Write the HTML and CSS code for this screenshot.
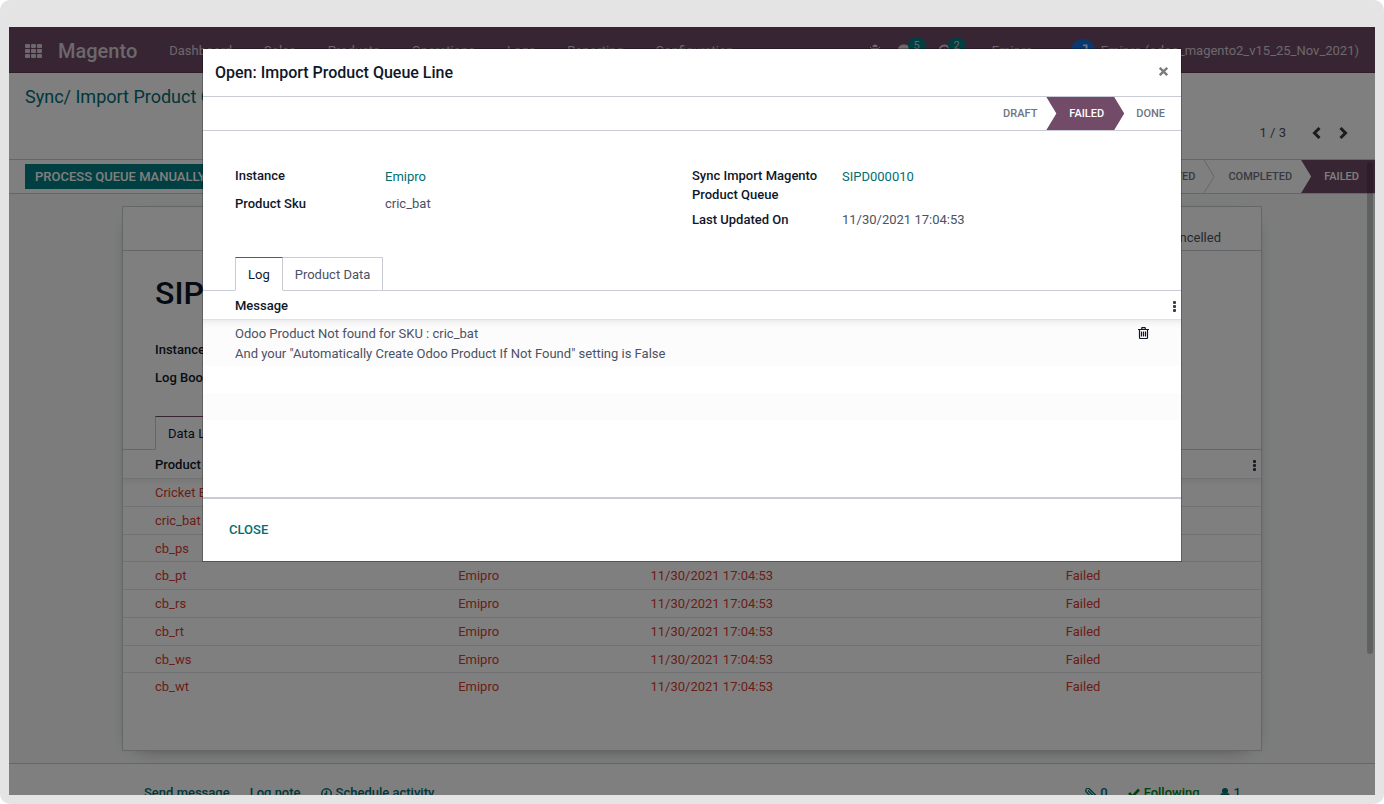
FILE: index.html
```
<!DOCTYPE html>
<html lang="en">
<head>
<meta charset="utf-8">
<title>Magento - Import Product Queue Line</title>
<link rel="stylesheet" href="styles.css">
</head>
<body>
<div class="frame">
<div class="app">
  <header class="navbar">
    <button class="apps" aria-label="Apps"><svg width="18" height="14" viewBox="0 0 18 14" fill="currentColor"><rect x="0" y="0" width="5" height="4" rx="1"/><rect x="6" y="0" width="5" height="4" rx="1"/><rect x="12" y="0" width="5" height="4" rx="1"/><rect x="0" y="5" width="5" height="4" rx="1"/><rect x="6" y="5" width="5" height="4" rx="1"/><rect x="12" y="5" width="5" height="4" rx="1"/><rect x="0" y="10" width="5" height="4" rx="1"/><rect x="6" y="10" width="5" height="4" rx="1"/><rect x="12" y="10" width="5" height="4" rx="1"/></svg></button>
    <a class="brand" href="#">Magento</a>
    <nav class="menu">
      <a href="#">Dashboard</a><a href="#">Sales</a><a href="#">Products</a><a href="#">Operations</a><a href="#">Logs</a><a href="#">Reporting</a><a href="#">Configuration</a>
    </nav>
    <div class="systray">
      <button class="tray" aria-label="Debug"><svg width="12" height="14" viewBox="0 0 12 14" fill="currentColor"><path d="M3.500 3a2.500 2.500 0 0 1 5 0z"/><path d="M3 4h6v5a3 3 0 0 1-6 0z"/><path d="M1 3l2 2M11 3L9 5M0 8h3M9 8h3M1 12l2-2M11 12l-2-2" stroke="currentColor" stroke-width="1" fill="none"/></svg></button>
      <button class="tray" aria-label="Messages"><svg width="15" height="13" viewBox="0 0 15 13" fill="currentColor"><ellipse cx="6" cy="5" rx="6" ry="4.500"/><path d="M2 7l-1 4 4-2zM12.500 4.500c0 3-3 5-5.500 5 2 2 4 1.500 4.500 1.300L14 12l-.7-2C15.500 8.500 15 5.500 12.500 4.500z"/></svg><span class="badge">5</span></button>
      <button class="tray" aria-label="Activities"><svg width="13" height="13" viewBox="0 0 13 13" fill="none" stroke="currentColor" stroke-width="2"><circle cx="6.500" cy="6.500" r="5"/><path d="M6.500 4.500v3h-2" stroke-width="1"/></svg><span class="badge">2</span></button>
      <a class="company" href="#">Emipro</a>
      <a class="user" href="#"><svg width="24" height="24" viewBox="0 0 24 24"><circle cx="12" cy="12" r="12" fill="#1272e0"/><path d="M12 7V5.500h4.500V15h-2V7z" fill="#e8e8e8"/></svg>Emipro (odoo_magento2_v15_25_Nov_2021)</a>
    </div>
  </header>

  <div class="control-panel">
    <a class="crumb" href="#">Sync/ Import Product Queue</a>
    <div class="pager">
      <span class="pager-value">1 / 3</span>
      <button aria-label="Previous"><svg width="9" height="12" viewBox="0 0 9 12" fill="none" stroke="currentColor" stroke-width="3"><path d="M7.500 1L2.500 6l5 5"/></svg></button>
      <button aria-label="Next"><svg width="9" height="12" viewBox="0 0 9 12" fill="none" stroke="currentColor" stroke-width="3"><path d="M1.500 1l5 5-5 5"/></svg></button>
    </div>
  </div>

  <div class="statusbar">
    <button class="primary">Process Queue Manually</button>
    <div class="steps">
      <span class="step">Partially Completed</span>
      <svg class="chevron" width="11" height="33" viewBox="0 0 11 33" fill="none" stroke="currentColor"><path d="M0 0l10 16.500L0 33"/></svg>
      <span class="step">Completed</span>
      <span class="step current end">Failed</span>
    </div>
  </div>

  <main class="content">
    <section class="sheet">
      <div class="button-box"><span>Cancelled</span></div>
      <h1>SIPD000010</h1>
      <dl class="group single">
        <dt>Instance</dt><dd>Emipro</dd>
        <dt>Log Book</dt><dd>LOG/000010</dd>
      </dl>
      <div class="tabs"><button class="tab active">Data Lines</button></div>
      <table class="list queue">
        <colgroup><col class="c-product"><col class="c-instance"><col class="c-date"><col></colgroup>
        <thead><tr><th>Product SKU</th><th>Instance</th><th>Last Updated On</th><th class="opt"><button class="kebab" aria-label="Columns"><i></i><i></i><i></i></button></th></tr></thead>
        <tbody>
          <tr><td>Cricket Bat</td><td>Emipro</td><td>11/30/2021 17:04:53</td><td>Failed</td></tr>
          <tr><td>cric_bat</td><td>Emipro</td><td>11/30/2021 17:04:53</td><td>Failed</td></tr>
          <tr><td>cb_ps</td><td>Emipro</td><td>11/30/2021 17:04:53</td><td>Failed</td></tr>
          <tr><td>cb_pt</td><td>Emipro</td><td>11/30/2021 17:04:53</td><td>Failed</td></tr>
          <tr><td>cb_rs</td><td>Emipro</td><td>11/30/2021 17:04:53</td><td>Failed</td></tr>
          <tr><td>cb_rt</td><td>Emipro</td><td>11/30/2021 17:04:53</td><td>Failed</td></tr>
          <tr><td>cb_ws</td><td>Emipro</td><td>11/30/2021 17:04:53</td><td>Failed</td></tr>
          <tr><td>cb_wt</td><td>Emipro</td><td>11/30/2021 17:04:53</td><td>Failed</td></tr>
        </tbody>
      </table>
    </section>
  </main>

  <footer class="chatter">
    <div class="chatter-bar">
      <a href="#">Send message</a>
      <a href="#">Log note</a>
      <a href="#"><svg width="11" height="11" viewBox="0 0 11 11" fill="none" stroke="currentColor" stroke-width="1.500"><circle cx="5.500" cy="5.500" r="4.700"/><path d="M5.500 2.500v3.500H3.200"/></svg>Schedule activity</a>
      <div class="chatter-right">
        <a href="#"><svg width="11" height="11" viewBox="0 0 11 11" fill="none" stroke="currentColor" stroke-width="1.300"><path d="M3 2.500l5 5a1 1 0 0 0 1.500-1.500L4.500 1A2 2 0 0 0 1.300 4l5.500 5.700a2.300 2.300 0 0 0 3.400-3.200"/></svg>0</a>
        <a href="#" class="following"><svg width="12" height="11" viewBox="0 0 12 11" fill="none" stroke="currentColor" stroke-width="2.600"><path d="M1 5l3.500 3.500L11 1.500"/></svg>Following</a>
        <a href="#"><svg width="10" height="11" viewBox="0 0 10 11" fill="currentColor"><circle cx="5" cy="3" r="3"/><path d="M0 9c0-2.500 1-4 2.500-4 1 1.300 4 1.300 5 0C9 5 10 6.500 10 9c0 1.500-.8 2-2 2H2C.8 11 0 10.500 0 9z"/></svg>1</a>
      </div>
    </div>
  </footer>
  <div class="scroll-thumb"></div>

  <div class="backdrop">
    <div class="modal" role="dialog" aria-labelledby="dialog-title">
      <div class="modal-header">
        <h2 id="dialog-title">Open: Import Product Queue Line</h2>
        <button class="close" aria-label="Close"><svg width="9" height="9" viewBox="0 0 9 9" stroke="currentColor" stroke-width="2.400"><path d="M.8.8l7.400 7.400M8.200.8L.8 8.200"/></svg></button>
      </div>
      <div class="modal-status">
        <div class="steps">
          <span class="step">Draft</span>
          <span class="step current">Failed</span>
          <span class="step last">Done</span>
        </div>
      </div>
      <div class="modal-body">
        <div class="groups">
          <dl class="group">
            <dt>Instance</dt><dd><a href="#">Emipro</a></dd>
            <dt>Product Sku</dt><dd>cric_bat</dd>
          </dl>
          <dl class="group">
            <dt>Sync Import Magento Product Queue</dt><dd><a href="#">SIPD000010</a></dd>
            <dt>Last Updated On</dt><dd>11/30/2021 17:04:53</dd>
          </dl>
        </div>
        <div class="tabs"><button class="tab active">Log</button><button class="tab">Product Data</button></div>
        <table class="list log">
          <thead><tr><th>Message</th><th class="opt"><button class="kebab" aria-label="Columns"><i></i><i></i><i></i></button></th></tr></thead>
          <tbody>
            <tr><td>Odoo Product Not found for SKU : cric_bat<br>And your "Automatically Create Odoo Product If Not Found" setting is False</td>
            <td class="trash-cell"><button class="trash" aria-label="Delete row"><svg width="11" height="12" viewBox="0 0 11 12" fill="none" stroke="currentColor" stroke-width="1.200"><path d="M0 2.500h11M3.500 2.500L4 .6h3l.5 1.900M1.500 3v7.500a1 1 0 0 0 1 1h6a1 1 0 0 0 1-1V3M3.500 4.500v5M5.500 4.500v5M7.500 4.500v5"/></svg></button></td></tr>
            <tr><td colspan="2">&nbsp;</td></tr>
            <tr><td colspan="2">&nbsp;</td></tr>
            <tr><td colspan="2">&nbsp;</td></tr>
          </tbody>
        </table>
      </div>
      <div class="modal-footer"><button class="link-button">Close</button></div>
    </div>
  </div>
</div>
</div>
</body>
</html>
```
FILE: styles.css
```
* { box-sizing: border-box; }
body {
  margin: 0;
  background: #fff;
  color: #4c5163;
  font: 13px/20px Roboto, "Liberation Sans", sans-serif;
}
a { color: #016e72; text-decoration: none; }
button { font: inherit; color: inherit; background: none; border: 0; padding: 0; margin: 0; }
svg { display: block; flex: none; }
h1, h2, dl, dd { margin: 0; }

.frame {
  height: 100vh;
  padding: 27px 9px 9px;
  background: #e4e4e4;
  border-radius: 10px;
}
.app {
  position: relative;
  height: 100%;
  overflow: hidden;
  display: flex;
  flex-direction: column;
  background: #fff;
}
.app > * { flex: none; }

/* Top bar */
.navbar {
  display: flex;
  align-items: center;
  height: 46px;
  padding: 2px 16px 0;
  background: #714b67;
  border-bottom: 1px solid #5a3c52;
  color: #d8d0d6;
}
.navbar a { color: inherit; }
.brand { margin-left: 15px; font-size: 20px; font-weight: 500; }
.menu { display: flex; margin-left: 16px; }
.menu a { padding: 0 16px; }
.systray { display: flex; align-items: center; margin-left: auto; }
.tray { position: relative; margin-right: 25px; }
.tray:first-child { margin-right: 17px; }
.badge {
  position: absolute;
  left: 10px;
  top: -6px;
  width: 18px;
  height: 15px;
  border-radius: 8px;
  background: #017e84;
  font-size: 11px;
  line-height: 15px;
  text-align: center;
}
.company { margin: 0 38px 0 16px; }
.user { display: flex; align-items: center; gap: 6px; }

/* Breadcrumb and pager */
.control-panel {
  display: flex;
  justify-content: space-between;
  height: 87px;
  padding: 12px 27px 16px 16px;
  border-bottom: 1px solid #c9ccd2;
}
.crumb { font-size: 18px; line-height: 24px; }
.pager { display: flex; align-items: center; align-self: flex-end; gap: 18px; color: #343a40; }
.pager-value { margin-right: 8px; color: #4c5163; }

/* Status bar */
.statusbar {
  display: flex;
  align-items: center;
  justify-content: space-between;
  height: 34px;
  padding-left: 16px;
  border-bottom: 1px solid #c9ccd2;
}
.primary {
  height: 25px;
  padding: 0 10px;
  background: #017e84;
  color: #fff;
  font-weight: 500;
  text-transform: uppercase;
}
.steps {
  display: flex;
  align-items: center;
  height: 33px;
  color: #6f7482;
  font-size: 11px;
  font-weight: 500;
  text-transform: uppercase;
}
.step { padding: 1px 9px 0; line-height: 32px; }
.step.current {
  padding: 1px 20px 0 23px;
  background: #714b67;
  color: #fff;
  clip-path: polygon(0 0, calc(100% - 10px) 0, 100% 50%, calc(100% - 10px) 100%, 0 100%, 10px 50%);
}
.step.end { padding-right: 16px; clip-path: polygon(0 0, 100% 0, 100% 100%, 0 100%, 10px 50%); }
.step.last { padding: 1px 16px 0 12px; }
.chevron { color: #c9ccd2; margin-right: 4px; }

/* Form sheet */
.content { padding: 12px 16px; background: #f8f9fa; border-bottom: 1px solid #c9ccd2; }
.sheet {
  max-width: 1140px;
  min-height: 545px;
  margin: 0 auto;
  background: #fff;
  border: 1px solid #c9ccd2;
  box-shadow: 0 5px 20px -15px #000;
}
.button-box {
  display: flex;
  align-items: center;
  justify-content: flex-end;
  height: 44px;
  padding: 18px 40px 0 0;
  border-bottom: 1px solid #c9ccd2;
}
.sheet h1 { padding: 23px 32px 0; color: #0b1426; font-size: 32px; line-height: 38px; font-weight: 500; }

.group {
  display: grid;
  grid-template-columns: 150px 1fr;
  align-content: start;
  row-gap: 6px;
}
.group dt { color: #0f172a; font-weight: 500; line-height: 19px; padding-right: 16px; }
.group dd { line-height: 20px; }
.group dd a { display: block; line-height: 22px; }
.single { padding: 28px 32px 0; row-gap: 8px; }

/* Notebook tabs */
.tabs {
  display: flex;
  padding-left: 32px;
  border-bottom: 1px solid #c9ccd6;
}
.tab {
  height: 34px;
  margin-bottom: -1px;
  padding: 2px 12px 0;
  border: 1px solid #c9ccd6;
}
.tab + .tab { border-left: 0; }
.tab.active { background: #fff; border-top-color: #714b67; border-bottom-color: #fff; color: #0f172a; }
.sheet .tabs { margin-top: 28px; }

/* Lists */
.list { width: 100%; border-collapse: separate; border-spacing: 0; }
.list th {
  height: 29px;
  padding: 2px 4px 0;
  border-bottom: 1px solid #dee2e6;
  color: #0f172a;
  font-weight: 500;
  text-align: left;
}
.list td { padding: 4px; vertical-align: top; }
.list tr > :first-child { padding-left: 32px; }
.list tbody { box-shadow: inset 0 8px 8px -8px rgba(0, 0, 0, 0.12); }
.list .opt { padding: 2px 5px 0; }
.kebab { display: flex; flex-direction: column; gap: 1px; margin-left: auto; }
.kebab i { width: 3px; height: 3px; border-radius: 1px; background: #343a50; }
.queue { height: 250px; table-layout: fixed; }
.queue td { padding: 5px 4px 3px; border-bottom: 1px solid #dee2e6; color: #d93a30; line-height: 18px; }
.queue tr:last-child td { border-bottom: 0; }
.c-product { width: 29.1%; }
.c-instance { width: 16.9%; }
.c-date { width: 36.5%; }

/* Chatter */
.chatter-bar {
  display: flex;
  gap: 20px;
  max-width: 1140px;
  margin: 0 auto;
  padding: 19px 21px 19px 22px;
}
.chatter-bar a { display: flex; align-items: center; gap: 4px; font-weight: 500; }
.chatter-right { display: flex; gap: 20px; margin-left: auto; }
.chatter-bar .following { color: #008818; }

.scroll-thumb {
  position: absolute;
  top: 135px;
  right: 2px;
  width: 6px;
  height: 492px;
  border-radius: 3px;
  background: rgba(0, 0, 0, 0.22);
}

/* Dialog */
.backdrop {
  position: absolute;
  inset: 0;
  padding: 21px 16px;
  background: rgba(0, 0, 0, 0.5);
}
.modal {
  max-width: 980px;
  margin: 0 auto;
  background: #fff;
  background-clip: padding-box;
  border: 1px solid rgba(0, 0, 0, 0.25);
}
.modal-header {
  display: flex;
  align-items: center;
  justify-content: space-between;
  height: 48px;
  padding: 0 13px 0 12px;
  border-bottom: 1px solid #c9ccd6;
}
.modal-header h2 { color: #0f172a; font-size: 16px; line-height: 24px; font-weight: 500; }
.close { padding-bottom: 2px; color: #7c7c7c; }
.modal-status { display: flex; justify-content: flex-end; height: 34px; border-bottom: 1px solid #c9ccd6; }
.modal-body { min-height: 366px; padding-top: 35px; }
.groups { display: grid; grid-template-columns: 1fr 1fr; padding: 0 32px; min-height: 91px; }
.log tbody tr:nth-child(odd) td { background: rgba(0, 0, 0, 0.01); }
.log tbody td { padding: 4px 5px 3px; }
.log tbody tr:first-child td { padding-bottom: 2px; }
.trash-cell { width: 48px; }
.trash { display: block; margin-top: 3px; color: #0f172a; }
.modal-footer { padding: 16px; border-top: 2px solid #c9ccd6; }
.link-button { padding: 5px 10px; color: #016e72; font-weight: 500; text-transform: uppercase; }
```
